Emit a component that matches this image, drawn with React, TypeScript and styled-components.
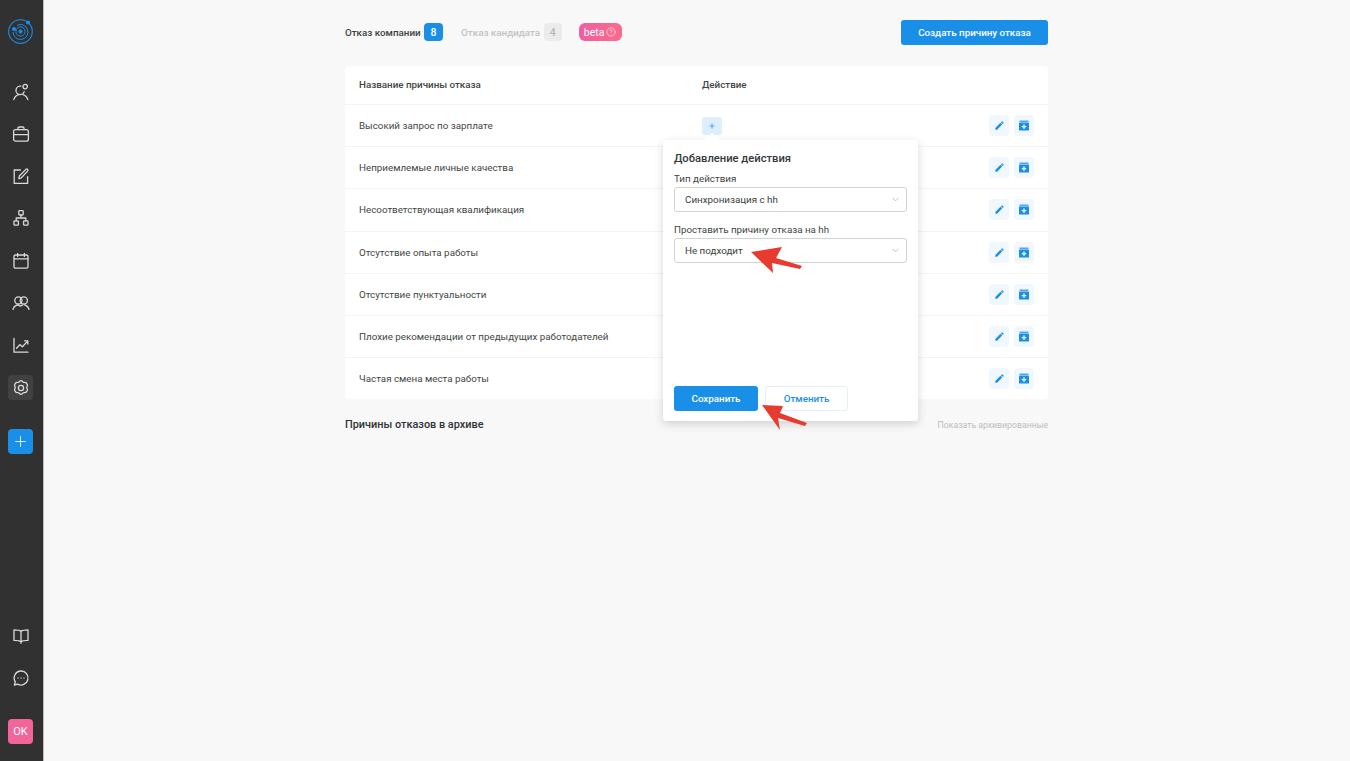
import React from "react";
import styled, { createGlobalStyle } from "styled-components";
import { ChevronDown, CircleHelp, Plus } from "lucide-react";

const GlobalStyle = createGlobalStyle`
  html, body {
    margin: 0;
    padding: 0;
    height: 100%;
    background: #f8f8f8;
    font-family: Roboto, "Noto Sans", sans-serif;
  }
  * { box-sizing: border-box; }
`;

const Page = styled.div`
  display: flex;
  height: 761px;
  overflow: hidden;
`;

const Sidebar = styled.aside`
  width: 44px;
  flex: none;
  display: flex;
  flex-direction: column;
  align-items: center;
  background: #313131;
  border-right: 1px solid #bdbdbd;
  padding: 18px 2px 17px 0;
`;

const Logo = styled.div`
  width: 25px;
  height: 26px;
  margin-bottom: 35px;
`;

const NavList = styled.nav`
  display: flex;
  flex-direction: column;
  align-items: center;
  gap: 17.3px;
`;

const NavItem = styled.div<{ $active?: boolean }>`
  width: 25px;
  height: 25px;
  display: flex;
  align-items: center;
  justify-content: center;
  border-radius: 4px;
  color: #d9d9d9;
  background: ${(p) => (p.$active ? "#414141" : "transparent")};
`;

const AddButton = styled.div`
  width: 25px;
  height: 25px;
  margin-top: 29px;
  display: flex;
  align-items: center;
  justify-content: center;
  border-radius: 4px;
  color: #fff;
  background: #1a8fe8;
`;

const SidebarBottom = styled.div`
  margin-top: auto;
  display: flex;
  flex-direction: column;
  align-items: center;
  gap: 17px;
`;

const Avatar = styled.div`
  width: 25px;
  height: 25px;
  margin-top: 12px;
  display: flex;
  align-items: center;
  justify-content: center;
  border-radius: 4px;
  color: #fff;
  font-size: 11px;
  background: #f2659a;
`;

const Main = styled.main`
  flex: 1;
  padding: 20px 0 0 301px;
`;

const Content = styled.div`
  width: 703px;
`;

const TopBar = styled.div`
  display: flex;
  align-items: center;
  height: 24px;
`;

const Tab = styled.div<{ $active?: boolean }>`
  display: flex;
  align-items: center;
  gap: 3.5px;
  margin-right: 18px;
  font-size: 9.8px;
  font-weight: 500;
  color: ${(p) => (p.$active ? "#3d4145" : "#c2c2c2")};
`;

const Count = styled.span<{ $active?: boolean }>`
  width: ${(p) => (p.$active ? 19 : 18)}px;
  height: 18px;
  display: flex;
  align-items: center;
  justify-content: center;
  border-radius: 4px;
  font-size: 10.5px;
  font-weight: 500;
  color: ${(p) => (p.$active ? "#fff" : "#b5b5b5")};
  background: ${(p) => (p.$active ? "#1a8fe8" : "#ebebeb")};
`;

const Beta = styled.span`
  display: flex;
  align-items: center;
  justify-content: center;
  gap: 2px;
  width: 43px;
  height: 18px;
  margin-left: -1px;
  border-radius: 6px;
  color: #fff;
  font-size: 10.5px;
  background: linear-gradient(90deg, #ef5f9f, #fb6a8c);
`;

const PrimaryButton = styled.button<{ $wide?: boolean }>`
  width: ${(p) => (p.$wide ? 147 : 84)}px;
  height: 25px;
  border: none;
  border-radius: 3px;
  padding: 0;
  color: #fff;
  font-family: inherit;
  font-size: 9.8px;
  font-weight: 500;
  background: #1a8fe8;
`;

const CreateButton = styled(PrimaryButton)`
  margin-left: auto;
`;

const Card = styled.div`
  margin-top: 22px;
  background: #fff;
  border-radius: 4px;
`;

const Row = styled.div<{ $head?: boolean }>`
  position: relative;
  display: flex;
  align-items: center;
  height: ${(p) => (p.$head ? 38 : 42.2)}px;
  padding: ${(p) => (p.$head ? "0 14px 1px" : "0 14px")};
  font-size: 9.8px;
  font-weight: ${(p) => (p.$head ? 500 : 400)};
  color: ${(p) => (p.$head ? "#3f4742" : "#3f4742")};
  & + & {
    border-top: 1px solid #f3f3f3;
  }
`;

const NameCell = styled.div`
  width: 343px;
  flex: none;
`;

const PlusChip = styled.div`
  position: relative;
  width: 20px;
  height: 18px;
  display: flex;
  align-items: center;
  justify-content: center;
  border-radius: 3px;
  color: #1a8fe8;
  background: #dfeefb;
`;

const RowActions = styled.div`
  margin-left: auto;
  display: flex;
  gap: 5px;
`;

const IconButton = styled.div`
  width: 20px;
  height: 21px;
  display: flex;
  align-items: center;
  justify-content: center;
  border-radius: 4px;
  background: #f0f7fe;
`;

const Popover = styled.div`
  position: absolute;
  z-index: 2;
  left: 318px;
  top: 35px;
  width: 255px;
  height: 281px;
  padding: 12px 11px 10px 11px;
  display: flex;
  flex-direction: column;
  background: #fff;
  border-radius: 3px;
  box-shadow: 0 3px 10px rgba(0, 0, 0, 0.16);
  &::before {
    content: "";
    position: absolute;
    left: 44px;
    top: -5px;
    width: 10px;
    height: 10px;
    background: #fff;
    transform: rotate(45deg);
  }
`;

const PopoverTitle = styled.div`
  font-size: 11.2px;
  font-weight: 500;
  line-height: 14px;
  color: #33383b;
  margin-bottom: 6px;
`;

const FieldLabel = styled.div`
  font-size: 9.8px;
  line-height: 14px;
  color: #3f4742;
  margin-bottom: 1px;
`;

const SelectBox = styled.div`
  height: 25px;
  display: flex;
  align-items: center;
  justify-content: space-between;
  margin-bottom: 11px;
  padding: 0 5px 0 10px;
  font-size: 9.8px;
  color: #3a413d;
  border: 1px solid #cfd3d3;
  border-radius: 3px;
`;

const PopoverFooter = styled.div`
  margin-top: auto;
  display: flex;
  gap: 7px;
`;

const GhostButton = styled.button`
  width: 83px;
  height: 25px;
  padding: 0;
  border: 1px solid #e3f0fb;
  border-radius: 3px;
  font-family: inherit;
  font-size: 9.8px;
  font-weight: 500;
  color: #1a8fe8;
  background: #fff;
`;

const ArchiveBar = styled.div`
  display: flex;
  align-items: center;
  justify-content: space-between;
  margin-top: 19px;
`;

const ArchiveTitle = styled.div`
  font-size: 10.9px;
  font-weight: 500;
  color: #2f3336;
`;

const ArchiveLink = styled.div`
  font-size: 8.7px;
  color: #bcbcbc;
`;

const Callout = styled.svg<{ $x: number; $y: number }>`
  position: absolute;
  z-index: 3;
  left: ${(p) => p.$x}px;
  top: ${(p) => p.$y}px;
`;

const reasons = [
  "Высокий запрос по зарплате",
  "Неприемлемые личные качества",
  "Несоответствующая квалификация",
  "Отсутствие опыта работы",
  "Отсутствие пунктуальности",
  "Плохие рекомендации от предыдущих работодателей",
  "Частая смена места работы",
];

const LogoMark = () => (
  <svg width="25" height="26" viewBox="0 0 25 26" fill="none" stroke="#1a8fe8">
    <circle cx="12.5" cy="13.5" r="11.8" strokeWidth="1.1" />
    <path d="M5 14a7.5 7.5 0 1 0 4-6.6" strokeWidth="1" />
    <circle cx="12.5" cy="13.5" r="4.6" strokeWidth="1" />
    <circle cx="12.5" cy="13.5" r="2" fill="#1a8fe8" stroke="none" />
    <circle cx="6" cy="11" r="2.1" fill="#1a8fe8" stroke="none" />
    <circle cx="20" cy="4.5" r="2.1" fill="#1a8fe8" stroke="none" />
  </svg>
);

const NavIcon = ({ children }: { children: React.ReactNode }) => (
  <svg
    width="18"
    height="18"
    viewBox="0 0 18 18"
    fill="none"
    stroke="currentColor"
    strokeWidth="1.3"
    strokeLinecap="round"
    strokeLinejoin="round"
  >
    {children}
  </svg>
);

const UserSearchIcon = () => (
  <NavIcon>
    <path d="M8.8 3.2A4.2 4.2 0 1 0 12.2 8.6" />
    <path d="M1.8 16.6c.9-2.6 2.8-4.4 5-4.9M15.8 16.6c-.9-2.6-2.6-4.4-5-4.9" />
    <circle cx="13.2" cy="3.6" r="2.2" />
  </NavIcon>
);

const BriefcaseIcon = () => (
  <NavIcon>
    <rect x="1.6" y="4.6" width="14.8" height="11.6" rx="2" />
    <path d="M6 4.6V3.2c0-.8.5-1.2 1.2-1.2h3.6c.7 0 1.2.4 1.2 1.2v1.4" />
    <path d="M1.6 9.6h14.8" />
  </NavIcon>
);

const EditBoxIcon = () => (
  <NavIcon>
    <path d="M8.4 3H2.2v13.4h13.4V9.6" />
    <path d="M6.8 11.6l.5-2.6 6.6-6.6c.5-.5 1.2-.5 1.7 0 .5.5.5 1.2 0 1.7L9.4 10.8l-2.6.8z" />
  </NavIcon>
);

const StructureIcon = () => (
  <NavIcon>
    <rect x="6.8" y="1.6" width="4.4" height="4.4" rx="0.8" />
    <rect x="2" y="11.8" width="4.4" height="4.4" rx="0.8" />
    <rect x="11.6" y="11.8" width="4.4" height="4.4" rx="0.8" />
    <path d="M9 6v3M4.2 11.8V9h9.6v2.8" />
  </NavIcon>
);

const CalendarIcon = () => (
  <NavIcon>
    <rect x="2" y="3" width="14" height="13.2" rx="1.4" />
    <path d="M2 6.8h14M5.6 1.4v3M12.4 1.4v3" />
  </NavIcon>
);

const TeamIcon = () => (
  <NavIcon>
    <circle cx="6.4" cy="6.4" r="3.6" />
    <circle cx="11.8" cy="6.4" r="3.6" />
    <path d="M1 15.4c.6-2.4 2.4-4 4.4-4.6M17 15.4c-.6-2.4-2.4-4-4.4-4.6M6 11c1.2 1 3.4 1 4.6 0" />
  </NavIcon>
);

const ChartIcon = () => (
  <NavIcon>
    <path d="M2 2.4v13.8h14" />
    <path d="M4.6 12.2l3.2-3.6 2.6 2.2 5-5.4" />
    <path d="M12.6 4.8h3.2V8" />
  </NavIcon>
);

const GearIcon = () => (
  <NavIcon>
    <path d="M9 1.6c.9 0 1.3.6 1.8 1.2.4.5.9.7 1.6.6.8-.1 1.5-.1 2 .7l.9 1.5c.4.8.1 1.4-.3 2-.4.5-.4 1.2 0 1.8.4.6.7 1.2.3 2l-.9 1.5c-.5.8-1.2.8-2 .7-.7-.1-1.2.1-1.6.6-.5.6-.9 1.2-1.8 1.2s-1.3-.6-1.8-1.2c-.4-.5-.9-.7-1.6-.6-.8.1-1.5.1-2-.7l-.9-1.5c-.4-.8-.1-1.4.3-2 .4-.6.4-1.3 0-1.8-.4-.6-.7-1.2-.3-2l.9-1.5c.5-.8 1.2-.8 2-.7.7.1 1.2-.1 1.6-.6.5-.6.9-1.2 1.8-1.2z" />
    <circle cx="9" cy="9" r="2.6" />
  </NavIcon>
);

const BookIcon = () => (
  <NavIcon>
    <path d="M9 4.2C7.6 3 5.6 2.8 2 2.8v10.6c3.6 0 5.6.2 7 1.4 1.4-1.2 3.4-1.4 7-1.4V2.8c-3.6 0-5.6.2-7 1.4z" />
    <path d="M9 4.2v12" />
  </NavIcon>
);

const ChatIcon = () => (
  <NavIcon>
    <path d="M9 2a7 7 0 1 1-3.4 13.1L2.4 16l.9-3.2A7 7 0 0 1 9 2z" />
    <path d="M6 9h.01M9 9h.01M12 9h.01" />
  </NavIcon>
);

const PencilIcon = () => (
  <svg width="11" height="11" viewBox="0 0 24 24" fill="#1a8fe8">
    <path d="M3 17.25V21h3.75L17.81 9.94l-3.75-3.75L3 17.25zM20.71 7.04a1 1 0 0 0 0-1.41l-2.34-2.34a1 1 0 0 0-1.41 0l-1.83 1.83 3.75 3.75 1.83-1.83z" />
  </svg>
);

const ArchiveIcon = () => (
  <svg width="10" height="11" viewBox="0 0 10 11">
    <rect x="0.5" y="0.5" width="9" height="1.6" fill="#1a8fe8" opacity="0.75" />
    <rect x="0" y="2.6" width="10" height="8" rx="0.6" fill="#1a8fe8" />
    <path d="M2.8 6.6h4.4M5 4.4v4.4" stroke="#fff" strokeWidth="1.4" />
  </svg>
);

const ArrowCallout = ({ x, y, w, h, d }: { x: number; y: number; w: number; h: number; d: string }) => (
  <Callout $x={x} $y={y} width={w} height={h} viewBox={`0 0 ${w} ${h}`}>
    <path d={d} fill="#e63b2e" />
  </Callout>
);

export default function App() {
  return (
    <>
      <GlobalStyle />
      <Page>
        <Sidebar>
          <Logo>
            <LogoMark />
          </Logo>
          <NavList>
            <NavItem><UserSearchIcon /></NavItem>
            <NavItem><BriefcaseIcon /></NavItem>
            <NavItem><EditBoxIcon /></NavItem>
            <NavItem><StructureIcon /></NavItem>
            <NavItem><CalendarIcon /></NavItem>
            <NavItem><TeamIcon /></NavItem>
            <NavItem><ChartIcon /></NavItem>
            <NavItem $active><GearIcon /></NavItem>
          </NavList>
          <AddButton><Plus size={17} strokeWidth={1.2} /></AddButton>
          <SidebarBottom>
            <NavItem><BookIcon /></NavItem>
            <NavItem><ChatIcon /></NavItem>
            <Avatar>OK</Avatar>
          </SidebarBottom>
        </Sidebar>
        <Main>
          <Content>
            <TopBar>
              <Tab $active>Отказ компании <Count $active>8</Count></Tab>
              <Tab>Отказ кандидата <Count>4</Count></Tab>
              <Beta>beta <CircleHelp size={10} strokeWidth={1.4} /></Beta>
              <CreateButton $wide>Создать причину отказа</CreateButton>
            </TopBar>
            <Card>
              <Row $head>
                <NameCell>Название причины отказа</NameCell>
                <div>Действие</div>
              </Row>
              {reasons.map((reason, i) => (
                <Row key={reason}>
                  <NameCell>{reason}</NameCell>
                  {i === 0 && (
                    <PlusChip><Plus size={8} strokeWidth={2} /></PlusChip>
                  )}
                  <RowActions>
                    <IconButton><PencilIcon /></IconButton>
                    <IconButton><ArchiveIcon /></IconButton>
                  </RowActions>
                  {i === 0 && (
                    <Popover>
                      <PopoverTitle>Добавление действия</PopoverTitle>
                      <FieldLabel>Тип действия</FieldLabel>
                      <SelectBox>
                        Синхронизация с hh
                        <ChevronDown size={11} color="#b8bcbc" />
                      </SelectBox>
                      <FieldLabel>Проставить причину отказа на hh</FieldLabel>
                      <SelectBox>
                        Не подходит
                        <ChevronDown size={11} color="#b8bcbc" />
                      </SelectBox>
                      <PopoverFooter>
                        <PrimaryButton>Сохранить</PrimaryButton>
                        <GhostButton>Отменить</GhostButton>
                      </PopoverFooter>
                    </Popover>
                  )}
                </Row>
              ))}
            </Card>
            <ArchiveBar>
              <ArchiveTitle>Причины отказов в архиве</ArchiveTitle>
              <ArchiveLink>Показать архивированные</ArchiveLink>
            </ArchiveBar>
          </Content>
        </Main>
      </Page>
      <ArrowCallout x={750} y={245} w={55} h={30} d="M1 7 L32 2 L26 13 L52 21 L50 24 L22 18 L23 28 Z" />
      <ArrowCallout x={760} y={403} w={50} h={30} d="M2 2 L23 3 L20 10 L47 20 L45 23 L18 15 L20 27 Z" />
    </>
  );
}
